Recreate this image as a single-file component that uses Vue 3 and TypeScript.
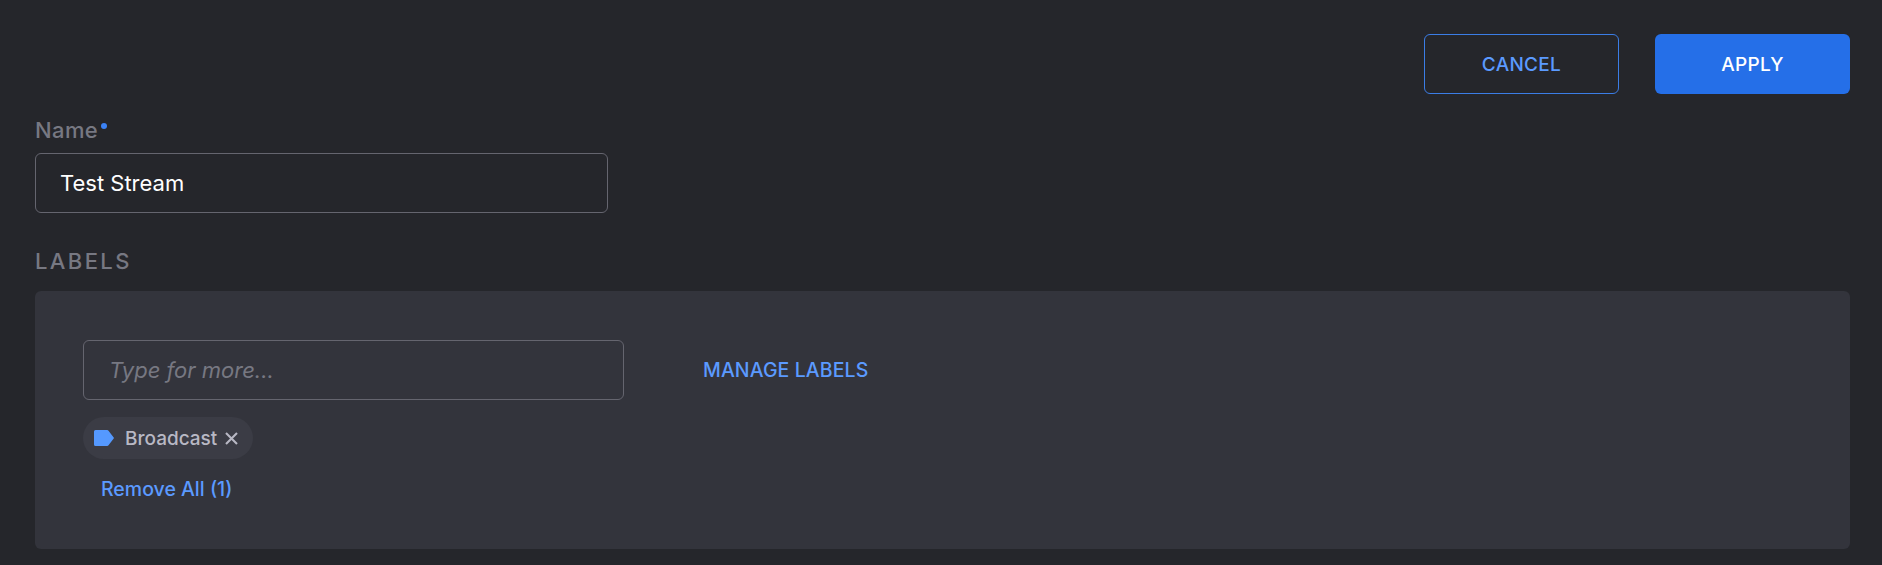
<script setup lang="ts">
const placeholder: string = 'Type for more...'
</script>

<template>
  <main class="page">
    <header class="actions">
      <button class="btn outline">CANCEL</button>
      <button class="btn solid">APPLY</button>
    </header>
    <div class="field-label">Name<span class="dot"></span></div>
    <div class="input name-input">Test Stream</div>
    <h2 class="section">LABELS</h2>
    <section class="panel">
      <div class="row">
        <div class="input label-input">{{ placeholder }}</div>
        <a class="manage">MANAGE LABELS</a>
      </div>
      <div class="chip">
        <svg class="tag" width="20" height="16" viewBox="0 0 20 16">
          <path d="M1.5 0H13.2a1.6 1.6 0 0 1 1.3.7L19.7 7.4a1 1 0 0 1 0 1.2L14.5 15.3a1.6 1.6 0 0 1-1.3.7H1.5A1.5 1.5 0 0 1 0 14.5V1.5A1.5 1.5 0 0 1 1.5 0Z" fill="#5599ff"/>
        </svg>
        <span class="chip-text">Broadcast</span>
        <svg class="x" width="13" height="13" viewBox="0 0 13 13">
          <path d="M1 1L12 12M12 1L1 12" stroke="#b8b8c4" stroke-width="2.1" fill="none"/>
        </svg>
      </div>
      <a class="remove">Remove All (1)</a>
    </section>
  </main>
</template>

<style>
html, body { margin: 0; background: #25262b; }
</style>

<style scoped>
.page {
  box-sizing: border-box;
  width: 1882px;
  height: 565px;
  padding: 34px 32px 0 35px;
  background: #25262b;
  font-family: Inter, "Liberation Sans", sans-serif;
  overflow: hidden;
}
.actions { display: flex; justify-content: flex-end; gap: 36px; }
.btn {
  box-sizing: border-box;
  width: 195px;
  height: 60px;
  border-radius: 6px;
  font: 500 19px Inter, sans-serif;
  letter-spacing: 0.3px;
  cursor: pointer;
}
.outline { background: transparent; border: 1px solid #3b7de6; color: #5b9aff; }
.solid { background: #256fe8; border: 0; color: #fff; }
.field-label {
  margin-top: 24px;
  height: 25px;
  font-size: 22px;
  line-height: 24px;
  font-weight: 500;
  letter-spacing: 0.4px;
  color: #777882;
}
.dot {
  display: inline-block;
  width: 6px;
  height: 6px;
  margin-left: 3px;
  border-radius: 50%;
  background: #3b82f6;
  vertical-align: 9px;
}
.input {
  box-sizing: border-box;
  height: 60px;
  display: flex;
  align-items: center;
  padding-left: 24px;
  border: 1px solid #65656f;
  border-radius: 6px;
}
.name-input { width: 573px; margin-top: 10px; color: #fff; font-size: 22px; }
.section {
  margin: 36px 0 0;
  height: 24px;
  font-size: 22px;
  line-height: 24px;
  font-weight: 500;
  letter-spacing: 2.4px;
  color: #777882;
}
.panel {
  box-sizing: border-box;
  width: 1815px;
  height: 258px;
  margin-top: 18px;
  padding: 49px 0 0 48px;
  background: #33343c;
  border-radius: 6px;
}
.row { display: flex; align-items: center; gap: 79px; }
.label-input { width: 541px; padding-left: 25px; font-size: 22px; font-style: italic; color: #777882; }
.manage { color: #5b9aff; font-size: 19.5px; font-weight: 500; letter-spacing: 0.1px; }
.chip {
  box-sizing: border-box;
  width: 170px;
  height: 42px;
  margin-top: 17px;
  display: flex;
  align-items: center;
  padding-left: 11px;
  background: #3b3c45;
  border-radius: 21px;
}
.chip-text { margin-left: 11px; color: #b8b8c4; font-size: 19px; font-weight: 500; }
.x { margin-left: 8px; }
.remove { display: block; margin: 18px 0 0 18px; color: #5b9aff; font-size: 19.5px; font-weight: 500; line-height: 24px; }
</style>
